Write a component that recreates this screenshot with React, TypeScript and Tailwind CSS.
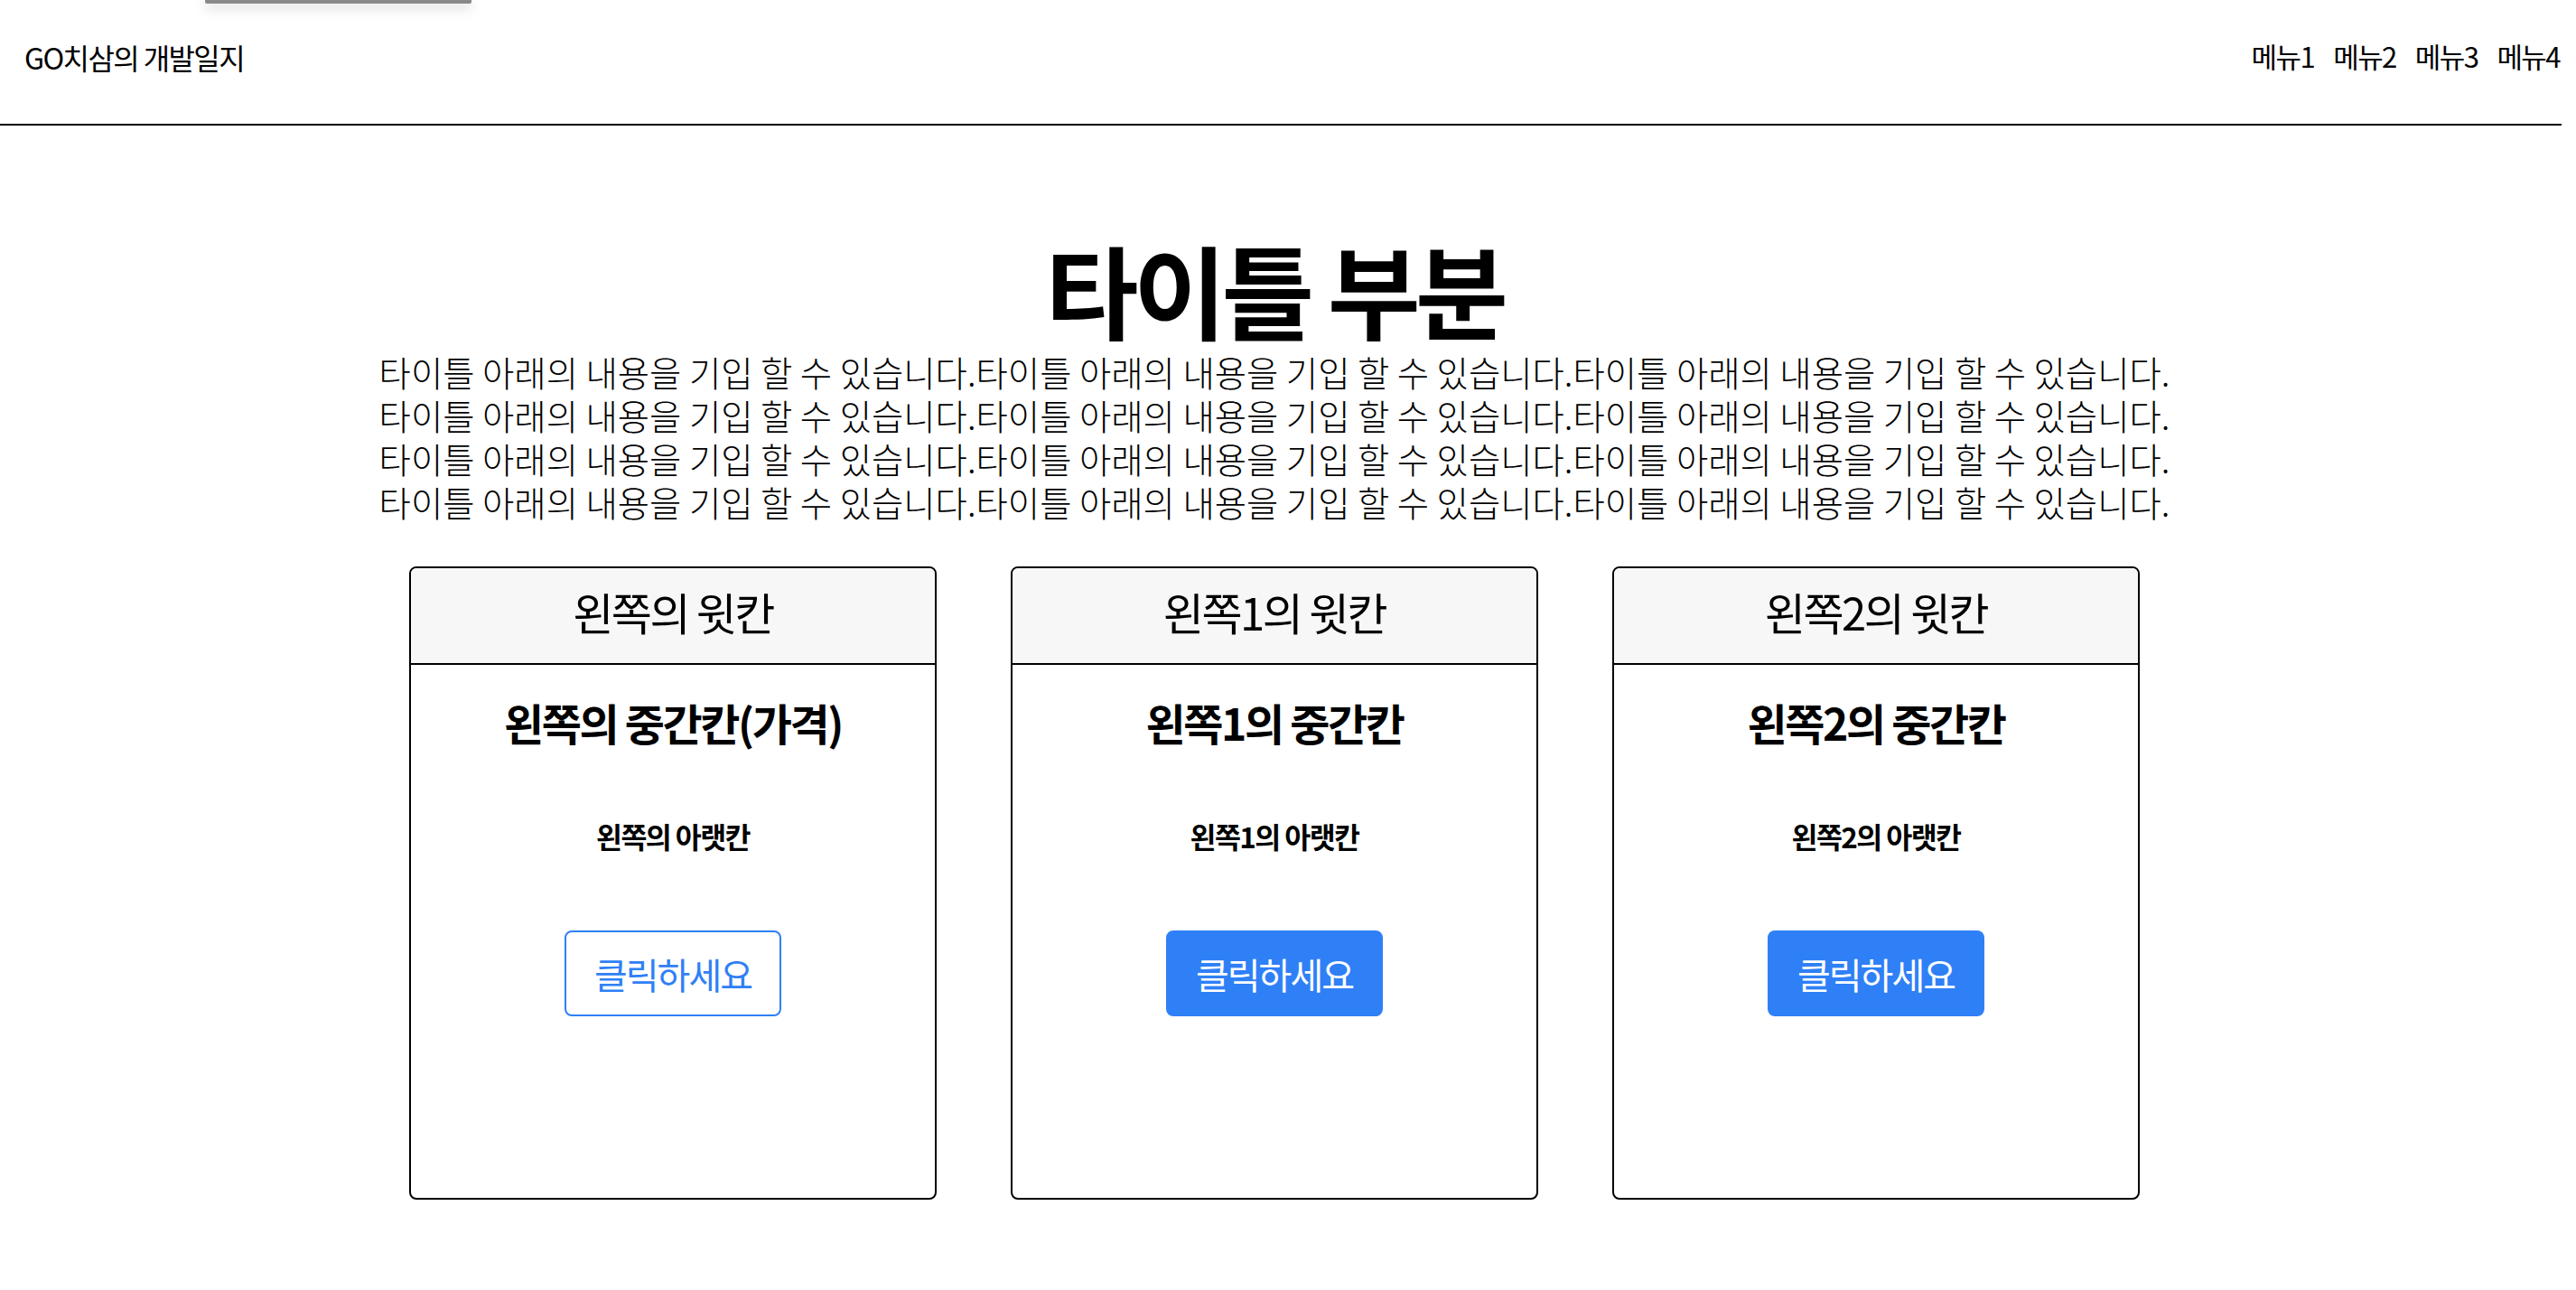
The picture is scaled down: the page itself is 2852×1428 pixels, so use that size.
const cards = [
  { top: "왼쪽의 윗칸", mid: "왼쪽의 중간칸(가격)", bottom: "왼쪽의 아랫칸", outline: true },
  { top: "왼쪽1의 윗칸", mid: "왼쪽1의 중간칸", bottom: "왼쪽1의 아랫칸", outline: false },
  { top: "왼쪽2의 윗칸", mid: "왼쪽2의 중간칸", bottom: "왼쪽2의 아랫칸", outline: false },
];

const sentence = "타이틀 아래의 내용을 기입 할 수 있습니다.";

export default function App() {
  return (
    <div className="relative min-h-[1428px] w-[2836px] bg-white font-['Noto_Sans_CJK_KR','Noto_Sans',sans-serif] text-black">
      {/* popup edge peeking in at the top */}
      <div className="absolute left-[227px] top-0 h-[4px] w-[295px] rounded-b-[2px] bg-[#8a8a8a] shadow-[0_4px_14px_rgba(0,0,0,0.28)]" />

      <header className="flex h-[139px] items-center justify-between border-b-2 border-black pb-[12px] pl-[27px] pr-[2px]">
        <div className="text-[32px] tracking-[-0.05em]">GO치삼의 개발일지</div>
        <nav className="flex gap-[21px] text-[31px] tracking-[-0.05em]">
          <a>메뉴1</a>
          <a>메뉴2</a>
          <a>메뉴3</a>
          <a>메뉴4</a>
        </nav>
      </header>

      <main className="flex flex-col items-center pr-[14px]">
        <h1 className="mt-[124px] text-[112px] font-bold leading-none tracking-[-0.05em]">
          타이틀 부분
        </h1>
        <p className="mt-[12px] text-center text-[38.4px] font-light leading-[48px]">
          {[0, 1, 2, 3].map((i) => (
            <span key={i} className="block">
              {sentence}
              {sentence}
              {sentence}
            </span>
          ))}
        </p>

        <div className="mt-[48px] flex gap-[82px]">
          {cards.map((c) => (
            <div
              key={c.top}
              className="flex h-[701px] w-[584px] flex-col overflow-hidden rounded-[8px] border-2 border-black text-center"
            >
              <div className="flex h-[107px] items-center justify-center border-b-2 border-black bg-[#f7f7f7] pb-[10px] text-[49px] tracking-[-0.05em]">
                {c.top}
              </div>
              <div className="flex flex-col items-center pt-[36px]">
                <div className="text-[48px] font-bold leading-[54px] tracking-[-0.05em]">{c.mid}</div>
                <div className="mt-[81px] text-[31.5px] font-bold leading-[36px] tracking-[-0.05em]">
                  {c.bottom}
                </div>
                <button
                  className={
                    c.outline
                      ? "mt-[87px] flex h-[95px] w-[240px] items-center justify-center rounded-[8px] border-2 border-[#2f80f6] bg-white text-[40px] tracking-[-0.05em] text-[#2f80f6]"
                      : "mt-[87px] flex h-[95px] w-[240px] items-center justify-center rounded-[8px] border-2 border-[#2f80f6] bg-[#2f80f6] text-[40px] tracking-[-0.05em] text-white"
                  }
                >
                  클릭하세요
                </button>
              </div>
            </div>
          ))}
        </div>
      </main>
    </div>
  );
}
